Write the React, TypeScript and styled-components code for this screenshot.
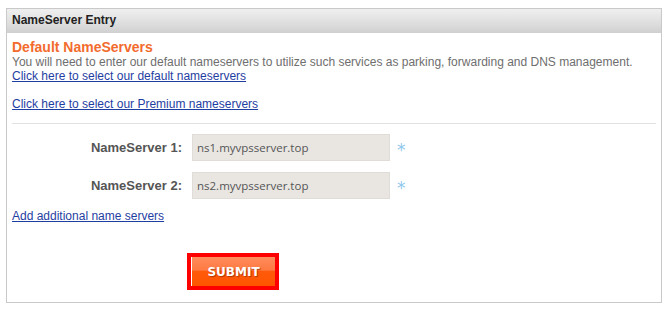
import React from "react";
import styled, { createGlobalStyle } from "styled-components";

const GlobalStyle = createGlobalStyle`
  body {
    margin: 0;
    background: #fff;
    font-family: "Liberation Sans", Arial, sans-serif;
  }
`;

const Page = styled.div`
  padding: 8px 6px 7px 6px;
`;

const Panel = styled.div`
  width: 656px;
  height: 295px;
  box-sizing: border-box;
  border: 1px solid #c9c9c9;
  background: #fff;
`;

const Header = styled.div`
  height: 24px;
  line-height: 22px;
  padding-left: 5px;
  font-size: 12px;
  font-weight: bold;
  color: #222;
  background: linear-gradient(#efefef 0%, #e4e4e4 40%, #d9d9d9 75%, #d0d0d0 100%);
`;

const Body = styled.div`
  padding: 6px 5px 0 5px;
`;

const Title = styled.div`
  font-size: 14px;
  line-height: 16px;
  font-weight: bold;
  color: #f26b2d;
`;

const Line = styled.div<{ $gap?: number }>`
  font-size: 12px;
  line-height: 14px;
  color: #6e6e6e;
  margin-top: ${(p) => p.$gap ?? 0}px;
`;

const Link = styled.a`
  color: #1f3ea2;
  text-decoration: underline;
  cursor: pointer;
`;

const Divider = styled.div`
  height: 1px;
  background: #e2e2e2;
  margin-top: 12px;
`;

const Form = styled.div`
  display: grid;
  grid-template-columns: 170px auto;
  column-gap: 10px;
  row-gap: 11px;
  margin-top: 10px;
  align-items: center;
`;

const Label = styled.label`
  text-align: right;
  font-size: 13px;
  font-weight: bold;
  color: #555;
`;

const InputRow = styled.div`
  display: flex;
  align-items: center;
  height: 27px;
  gap: 7px;
`;

const Field = styled.input`
  width: 198px;
  height: 27px;
  box-sizing: border-box;
  border: 1px solid #e0ddd8;
  background: #e9e6e2;
  padding: 0 4px;
  font-family: "Open Sans", "DejaVu Sans", sans-serif;
  font-size: 11.5px;
  color: #555;
  outline: none;
`;

const Required = styled.span`
  font-family: "DejaVu Sans", sans-serif;
  font-size: 17px;
  line-height: 1;
  margin-top: 6px;
  color: #8ec8ec;
`;

const ButtonFrame = styled.div`
  display: flex;
  width: max-content;
  margin: 30px 0 0 175px;
  border: 4px solid #ff0000;
`;

const SubmitButton = styled.button`
  display: block;
  width: 84px;
  height: 29px;
  border: none;
  border-left: 1px solid #fff;
  padding: 0;
  background: linear-gradient(#ff8c5c 0%, #ff7a42 45%, #ff5a0a 50%, #ff5500 100%);
  color: #fff;
  font-family: "DejaVu Sans", Verdana, sans-serif;
  font-size: 12px;
  font-weight: bold;
  text-shadow: 1px 1px 1px rgba(120, 30, 0, 0.6);
  cursor: pointer;
`;

const servers = ["ns1.myvpsserver.top", "ns2.myvpsserver.top"];

const App: React.FC = () => {
  return (
    <Page>
      <GlobalStyle />
      <Panel>
        <Header>NameServer Entry</Header>
        <Body>
          <Title>Default NameServers</Title>
          <Line>
            You will need to enter our default nameservers to utilize such services as parking, forwarding and DNS
            management.
          </Line>
          <Line>
            <Link>Click here to select our default nameservers</Link>
          </Line>
          <Line $gap={14}>
            <Link>Click here to select our Premium nameservers</Link>
          </Line>
          <Divider />
          <Form>
            {servers.map((ns, i) => (
              <React.Fragment key={ns}>
                <Label>NameServer {i + 1}:</Label>
                <InputRow>
                  <Field defaultValue={ns} />
                  <Required>*</Required>
                </InputRow>
              </React.Fragment>
            ))}
          </Form>
          <Line $gap={10}>
            <Link>Add additional name servers</Link>
          </Line>
          <ButtonFrame>
            <SubmitButton>SUBMIT</SubmitButton>
          </ButtonFrame>
        </Body>
      </Panel>
    </Page>
  );
};

export default App;
